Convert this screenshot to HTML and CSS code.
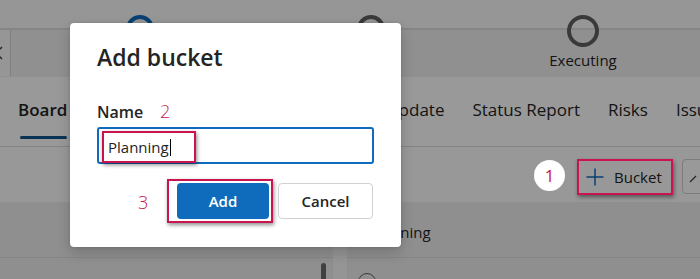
FILE: index.html
```html
<!DOCTYPE html>
<html lang="en">
<head>
<meta charset="utf-8">
<title>Add bucket</title>
<link rel="stylesheet" href="styles.css">
</head>
<body>
<div class="page">
  <header class="stagebar">
    <div class="scroll-btn">
      <svg width="12" height="16" viewBox="0 0 12 16"><polyline points="10,2 4,8 10,14" fill="none" stroke="#424242" stroke-width="1.5"/></svg>
    </div>
    <div class="stage s1"><span class="ring done"></span></div>
    <div class="stage s2"><span class="ring"></span></div>
    <div class="stage s3"><span class="ring lg"></span><span class="stage-label">Executing</span></div>
  </header>

  <nav class="tabs">
    <span class="tab active">Board</span>
    <span class="tab offset">Status Update</span>
    <span class="tab">Status Report</span>
    <span class="tab">Risks</span>
    <span class="tab">Issues</span>
  </nav>

  <div class="toolbar">
    <button class="bucket-btn">
      <svg width="18" height="18" viewBox="0 0 18 18"><path d="M9 0.5V17.5M0.5 9H17.5" stroke="#0f6cbd" stroke-width="1.5" fill="none"/></svg>
      <span>Bucket</span>
    </button>
    <button class="icon-btn">
      <svg width="16" height="16" viewBox="0 0 16 16"><path d="M3 13L9 7" stroke="#424242" stroke-width="1.3" fill="none"/></svg>
    </button>
  </div>

  <div class="board">
    <section class="column first">
      <div class="col-head"></div>
      <div class="col-body"><span class="thumb"></span></div>
    </section>
    <section class="column second">
      <div class="col-head">Planning</div>
      <div class="col-body"><span class="check"></span></div>
    </section>
  </div>
</div>

<div class="backdrop"></div>

<div class="dialog" role="dialog">
  <h2 class="dialog-title">Add bucket</h2>
  <label class="field-label">Name</label>
  <div class="text-input"><span>Planning</span><span class="caret"></span></div>
  <div class="dialog-actions">
    <button class="btn btn-primary">Add</button>
    <button class="btn btn-secondary">Cancel</button>
  </div>
</div>

<div class="mark mark-input"></div>
<div class="mark mark-add"></div>
<div class="mark mark-bucket"></div>
<span class="num num-2">2</span>
<span class="num num-3">3</span>
<span class="num-circle">1</span>
</body>
</html>
```

FILE: styles.css
```css
* { box-sizing: border-box; }
html, body { margin: 0; padding: 0; }
body {
  width: 700px;
  height: 279px;
  overflow: hidden;
  position: relative;
  font-family: "Open Sans", "Noto Sans", sans-serif;
  color: #242424;
  background: #fff;
}

/* ---------- underlying page ---------- */
.page { height: 279px; overflow: hidden; }
.stagebar {
  height: 77px;
  display: flex;
  align-items: flex-start;
  background: linear-gradient(#fafafa 0 28px, #dedede 28px 30px, #f1f1f1 30px);
}
.scroll-btn {
  width: 11px;
  height: 46px;
  margin-top: 30px;
  flex: none;
  background: #fbfbfb;
  border-right: 1px solid #d4d4d4;
  overflow: hidden;
  display: flex;
  align-items: center;
}
.scroll-btn svg { margin-left: -8px; flex: none; }
.stage {
  width: 200px;
  flex: none;
  display: flex;
  flex-direction: column;
  align-items: center;
}
.s1 { margin-left: 29px; }
.s2 { margin-left: 31px; }
.s3 { margin-left: 12px; }
.ring {
  width: 28px;
  height: 28px;
  margin-top: 15px;
  border: 4px solid #616161;
  border-radius: 50%;
}
.ring.done { border-color: #0f6cbd; }
.ring.lg { width: 32px; height: 32px; }
.stage-label {
  margin-top: 3px;
  font-size: 15px;
  line-height: 20px;
  color: #242424;
}

.tabs {
  height: 70px;
  display: flex;
  align-items: flex-start;
  gap: 28px;
  padding-left: 18px;
  border-bottom: 1px solid #dcdcdc;
  background: #fff;
  white-space: nowrap;
  overflow: hidden;
}
.tab {
  padding-top: 21px;
  font-size: 17px;
  line-height: 24px;
  color: #242424;
}
.tab.offset { margin-left: 237px; }
.tab.active { font-weight: 600; }
.tab.active::after {
  content: "";
  display: block;
  height: 3px;
  margin: 14px 0 0 2px;
  border-radius: 2px;
  background: #0f548c;
}

.toolbar {
  height: 55px;
  margin-right: -18px;
  padding-top: 12px;
  display: flex;
  justify-content: flex-end;
  align-items: flex-start;
  gap: 9px;
  background: #fdfdfd;
}
.bucket-btn {
  width: 96px;
  height: 36px;
  padding: 0 0 0 9px;
  display: flex;
  align-items: center;
  gap: 10px;
  border: none;
  background: transparent;
  font-family: inherit;
  font-size: 15px;
  color: #242424;
}
.bucket-btn svg { flex: none; }
.icon-btn {
  width: 36px;
  height: 35px;
  padding: 0 0 0 4px;
  display: flex;
  align-items: center;
  border: 1px solid #cfcfcf;
  border-radius: 4px;
  background: #fff;
}

.board {
  height: 77px;
  display: flex;
  gap: 14px;
  background: #f8f8f8;
}
.column {
  background: #efefef;
}
.column.first { width: 333px; }
.column.second { flex: 1; }
.col-head {
  height: 56px;
  padding: 20px 0 0 23px;
  font-size: 15px;
  line-height: 20px;
  color: #242424;
  border-bottom: 1px solid #dedede;
}
.col-body {
  height: 21px;
  display: flex;
  overflow: hidden;
}
.column.first .col-body { justify-content: flex-end; padding: 5px 7px 0 0; }
.thumb {
  width: 5px;
  height: 30px;
  flex: none;
  border-radius: 3px;
  background: #6b6b6b;
}
.column.second .col-body { padding: 15px 0 0 11px; }
.check {
  width: 18px;
  height: 18px;
  flex: none;
  border: 1.5px solid #616161;
  border-radius: 50%;
}

/* ---------- modal ---------- */
.backdrop {
  position: absolute;
  inset: 0;
  background: rgba(0, 0, 0, 0.4);
}
.dialog {
  position: absolute;
  left: 70px;
  top: 23px;
  width: 331px;
  height: 224px;
  padding: 18px 27px 28px;
  background: #fff;
  border-radius: 4px;
  box-shadow: 0 0 3px rgba(0, 0, 0, 0.15), 0 6px 14px rgba(0, 0, 0, 0.18);
}
.dialog-title {
  margin: 0;
  font-size: 23px;
  line-height: 32px;
  font-weight: 600;
  color: #242424;
}
.field-label {
  display: block;
  margin-top: 28px;
  font-size: 16px;
  line-height: 22px;
  font-weight: 600;
  color: #242424;
}
.text-input {
  margin-top: 4px;
  height: 37px;
  padding: 3px 0 0 9px;
  display: flex;
  align-items: center;
  border: 2px solid #0f6cbd;
  border-radius: 3px;
  font-size: 15px;
  color: #242424;
}
.caret {
  width: 1px;
  height: 17px;
  margin-left: 1px;
  background: #000;
}
.dialog-actions {
  margin-top: 19px;
  margin-right: 1px;
  display: flex;
  justify-content: flex-end;
  gap: 9px;
}
.btn {
  height: 36px;
  border-radius: 4px;
  font-family: inherit;
  font-size: 15px;
  font-weight: 600;
}
.btn-primary {
  width: 92px;
  border: none;
  background: #0f6cbd;
  color: #fff;
}
.btn-secondary {
  width: 95px;
  border: 1px solid #d1d1d1;
  background: #fff;
  color: #242424;
}

/* ---------- annotations ---------- */
.mark {
  position: absolute;
  border: 2px solid #c8144f;
  box-shadow: 1px 2px 4px rgba(0, 0, 0, 0.45);
}
.mark-input { left: 102px; top: 131px; width: 94px; height: 32px; }
.mark-add { left: 167px; top: 179px; width: 106px; height: 44px; }
.mark-bucket { left: 577px; top: 159px; width: 96px; height: 36px; }
.num {
  position: absolute;
  font-size: 18px;
  line-height: 18px;
  font-weight: 300;
  color: #c8144f;
}
.num-2 { left: 160px; top: 102px; }
.num-3 { left: 138px; top: 193px; }
.num-circle {
  position: absolute;
  left: 534px;
  top: 160px;
  width: 31px;
  height: 31px;
  border-radius: 50%;
  background: #fff;
  display: flex;
  align-items: center;
  justify-content: center;
  font-size: 17px;
  font-weight: 400;
  color: #c8144f;
}
```
